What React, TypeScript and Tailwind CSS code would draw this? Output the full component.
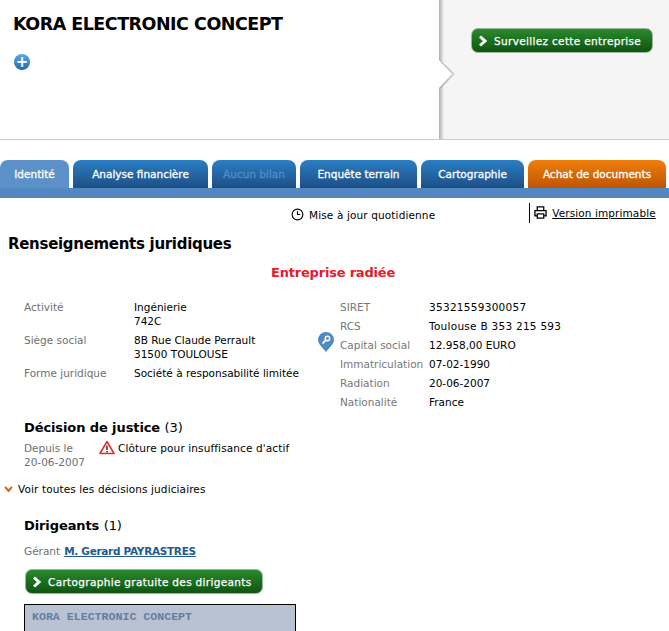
function Chevron({ className }: { className: string }) {
  return (
    <svg viewBox="0 0 10 12" className={className} fill="none" stroke="currentColor" strokeWidth="3">
      <path d="M2 1.5 L7 6 L2 10.5" />
    </svg>
  );
}

function GreenButton({ label, className }: { label: string; className: string }) {
  return (
    <div className={`flex items-center rounded-[7px] border border-[#9db59d] bg-gradient-to-b from-[#2c8a2c] via-[#1b6f1f] to-[#0f5513] tracking-[0.33px] text-white [-webkit-text-stroke:0.25px_white] ${className}`}>
      <Chevron className="ml-[6px] mr-[6px] h-[12px] w-[10px] text-white" />
      <span>{label}</span>
    </div>
  );
}

function Tab({ label, width, tone }: { label: string; width: string; tone: string }) {
  return (
    <div className={`flex h-[28px] items-center justify-center rounded-t-[8px] text-[10.5px] [-webkit-text-stroke:0.3px_currentColor] ${width} ${tone}`}>
      {label}
    </div>
  );
}

const blue = "bg-gradient-to-b from-[#2a7fc4] to-[#1d4f87] text-white";

function Row({ label, children }: { label: string; children: React.ReactNode }) {
  return (
    <div className="flex">
      <div className="w-[110px] text-[#6f6f6f]">{label}</div>
      <div className="text-black">{children}</div>
    </div>
  );
}

function RightRow({ label, value, valueClass = "" }: { label: string; value: string; valueClass?: string }) {
  return (
    <div className="flex h-[19px] items-center">
      <div className="w-[89px] text-[#777777]">{label}</div>
      <div className={`text-black ${valueClass}`}>{value}</div>
    </div>
  );
}

export default function App() {
  return (
    <div className="h-[631px] w-[669px] overflow-hidden bg-white font-['DejaVu_Sans',sans-serif] text-[10.5px] leading-[14px] text-black">
      <header className="flex h-[140px] border-b border-[#cccccc]">
        <div className="w-[439px] pl-[14px] pt-[13px]">
          <h1 className="-ml-[1px] text-[17.5px] font-bold leading-[22px] tracking-[-0.5px]">KORA ELECTRONIC CONCEPT</h1>
          <div className="mt-[19px] flex h-[16px] w-[16px] items-center justify-center rounded-full bg-gradient-to-b from-[#5aa8e6] to-[#1f6cb0] text-[15px] font-bold leading-none text-white">+</div>
        </div>
        <div className="relative flex-1 bg-gradient-to-r from-[#aeaeae] from-[0px] to-[#f5f5f5] to-[5px] pl-[32px] pt-[28px]">
          <svg viewBox="0 0 18 32" className="absolute left-0 top-[59px] h-[32px] w-[18px]">
            <defs>
              <linearGradient id="notch" x1="0" x2="1" y1="0" y2="0">
                <stop offset="0" stopColor="#a8a8a8" />
                <stop offset="1" stopColor="#d8d8d8" />
              </linearGradient>
            </defs>
            <path d="M0 0 L16 15 L0 31 Z" fill="url(#notch)" />
            <path d="M0 1 L13 15 L0 29 Z" fill="#ffffff" />
          </svg>
          <GreenButton label="Surveillez cette entreprise" className="h-[25px] w-[182px] text-[10.5px]" />
        </div>
      </header>

      <nav className="mt-[20px] flex justify-between pr-[3px]">
        <Tab label="Identité" width="w-[69px]" tone="bg-[#5b91c8] text-white" />
        <Tab label="Analyse financière" width="w-[135px]" tone={blue} />
        <Tab label="Aucun bilan" width="w-[84px]" tone="bg-gradient-to-b from-[#2a7fc4] to-[#1d4f87] text-[#4f8fc8]" />
        <Tab label="Enquête terrain" width="w-[117px]" tone={blue} />
        <Tab label="Cartographie" width="w-[103px]" tone={blue} />
        <Tab label="Achat de documents" width="w-[138px]" tone="bg-gradient-to-b from-[#f07f0a] to-[#bf5504] text-white" />
      </nav>
      <div className="h-[10px] bg-[#5288bf]" />

      <div className="flex h-[29px] items-start">
        <div className="ml-[291px] mt-[10px] flex items-center">
          <svg viewBox="0 0 14 14" className="-mt-[2px] mr-[5px] h-[13px] w-[13px]" fill="none" stroke="black" strokeWidth="1.2">
            <circle cx="7" cy="7" r="5.8" />
            <path d="M7 3.5 V7 H10" />
          </svg>
          <span className="tracking-[0.13px]">Mise à jour quotidienne</span>
        </div>
        <div className="ml-[94px] mt-[5px] flex h-[20px] border-l border-black pl-[4px] pt-[3px]">
          <svg viewBox="0 0 14 14" className="mr-[5px] h-[13px] w-[13px]" fill="none" stroke="black" strokeWidth="1.4">
            <path d="M3.5 5 V1 H10.5 V5" />
            <path d="M3 10.5 H1 V5 H13 V10.5 H11" />
            <path d="M3.5 8.5 H10.5 V13 H3.5 Z" />
          </svg>
          <span className="underline tracking-[0.1px]">Version imprimable</span>
        </div>
      </div>

      <h2 className="ml-[8px] mt-[7px] text-[15px] font-bold leading-[20px] tracking-[-0.3px]">Renseignements juridiques</h2>
      <div className="mt-[10px] ml-[271px] text-[13px] font-bold leading-[18px] tracking-[-0.2px] text-[#e8192c]">Entreprise radiée</div>

      <div className="mt-[18px] flex">
        <div className="ml-[24px] flex w-[292px] flex-col gap-[5px]">
          <Row label="Activité">Ingénierie<br />742C</Row>
          <Row label="Siège social">8B Rue Claude Perrault<br />31500 TOULOUSE</Row>
          <Row label="Forme juridique">Société à responsabilité limitée</Row>
        </div>
        <div className="relative -mt-[3px] ml-[24px] flex flex-col">
          <svg viewBox="0 0 16 20" className="absolute -left-[22px] top-[35px] h-[20px] w-[16px]">
            <path d="M8 20 C5 16 0 12 0 8 A8 8 0 0 1 16 8 C16 12 11 16 8 20 Z" fill="#4f8ac4" />
            <circle cx="9.5" cy="6.5" r="2.2" fill="none" stroke="white" strokeWidth="1.5" />
            <path d="M8 8 L4.5 11.5" stroke="white" strokeWidth="1.8" />
          </svg>
          <RightRow label="SIRET" value="35321559300057" valueClass="tracking-[0.28px]" />
          <RightRow label="RCS" value="Toulouse B 353 215 593" valueClass="tracking-[0.27px]" />
          <RightRow label="Capital social" value="12.958,00 EURO" />
          <RightRow label="Immatriculation" value="07-02-1990" />
          <RightRow label="Radiation" value="20-06-2007" />
          <RightRow label="Nationalité" value="France" />
        </div>
      </div>

      <h3 className="mt-[8px] ml-[24px] text-[13px] font-bold leading-[18px] tracking-[-0.1px]">
        Décision de justice <span className="font-normal">(3)</span>
      </h3>
      <div className="ml-[24px] mt-[4px] flex">
        <div className="w-[75px] text-[#6f6f6f]">Depuis le<br />20-06-2007</div>
        <div className="flex items-start">
          <svg viewBox="0 0 16 15" className="-mt-[1px] mr-[3px] h-[15px] w-[16px]" fill="none">
            <path d="M8 1.5 L15 13.5 H1 Z" stroke="#e03030" strokeWidth="1.6" strokeLinejoin="round" />
            <path d="M8 5.5 V10 M8 11 V12.5" stroke="black" strokeWidth="1.2" />
          </svg>
          <span className="tracking-[0.12px]">Clôture pour insuffisance d'actif</span>
        </div>
      </div>

      <div className="ml-[4px] mt-[13px] flex items-center">
        <svg viewBox="0 0 10 8" className="mr-[5px] h-[7px] w-[9px]" fill="none" stroke="#e0660c" strokeWidth="2.4">
          <path d="M1 1 L5 5.5 L9 1" />
        </svg>
        <span className="tracking-[0.11px]">Voir toutes les décisions judiciaires</span>
      </div>

      <h3 className="ml-[24px] mt-[21px] text-[13px] font-bold leading-[18px] tracking-[-0.1px]">
        Dirigeants <span className="font-normal">(1)</span>
      </h3>
      <div className="ml-[24px] mt-[9px] flex">
        <span className="mr-[4px] text-[#6f6f6f]">Gérant</span>
        <span className="font-bold tracking-[-0.3px] text-[#1f5a92] underline">M. Gerard PAYRASTRES</span>
      </div>
      <GreenButton label="Cartographie gratuite des dirigeants" className="ml-[25px] mt-[11px] h-[25px] w-[238px] text-[10.5px]" />
      <div className="ml-[24px] mt-[10px] h-[60px] w-[272px] border border-black bg-[#b8c2d3] pl-[7px] pt-[5px] font-['Liberation_Mono',monospace] text-[11.6px] font-bold text-[#5f7fa3]">
        KORA ELECTRONIC CONCEPT
      </div>
    </div>
  );
}
